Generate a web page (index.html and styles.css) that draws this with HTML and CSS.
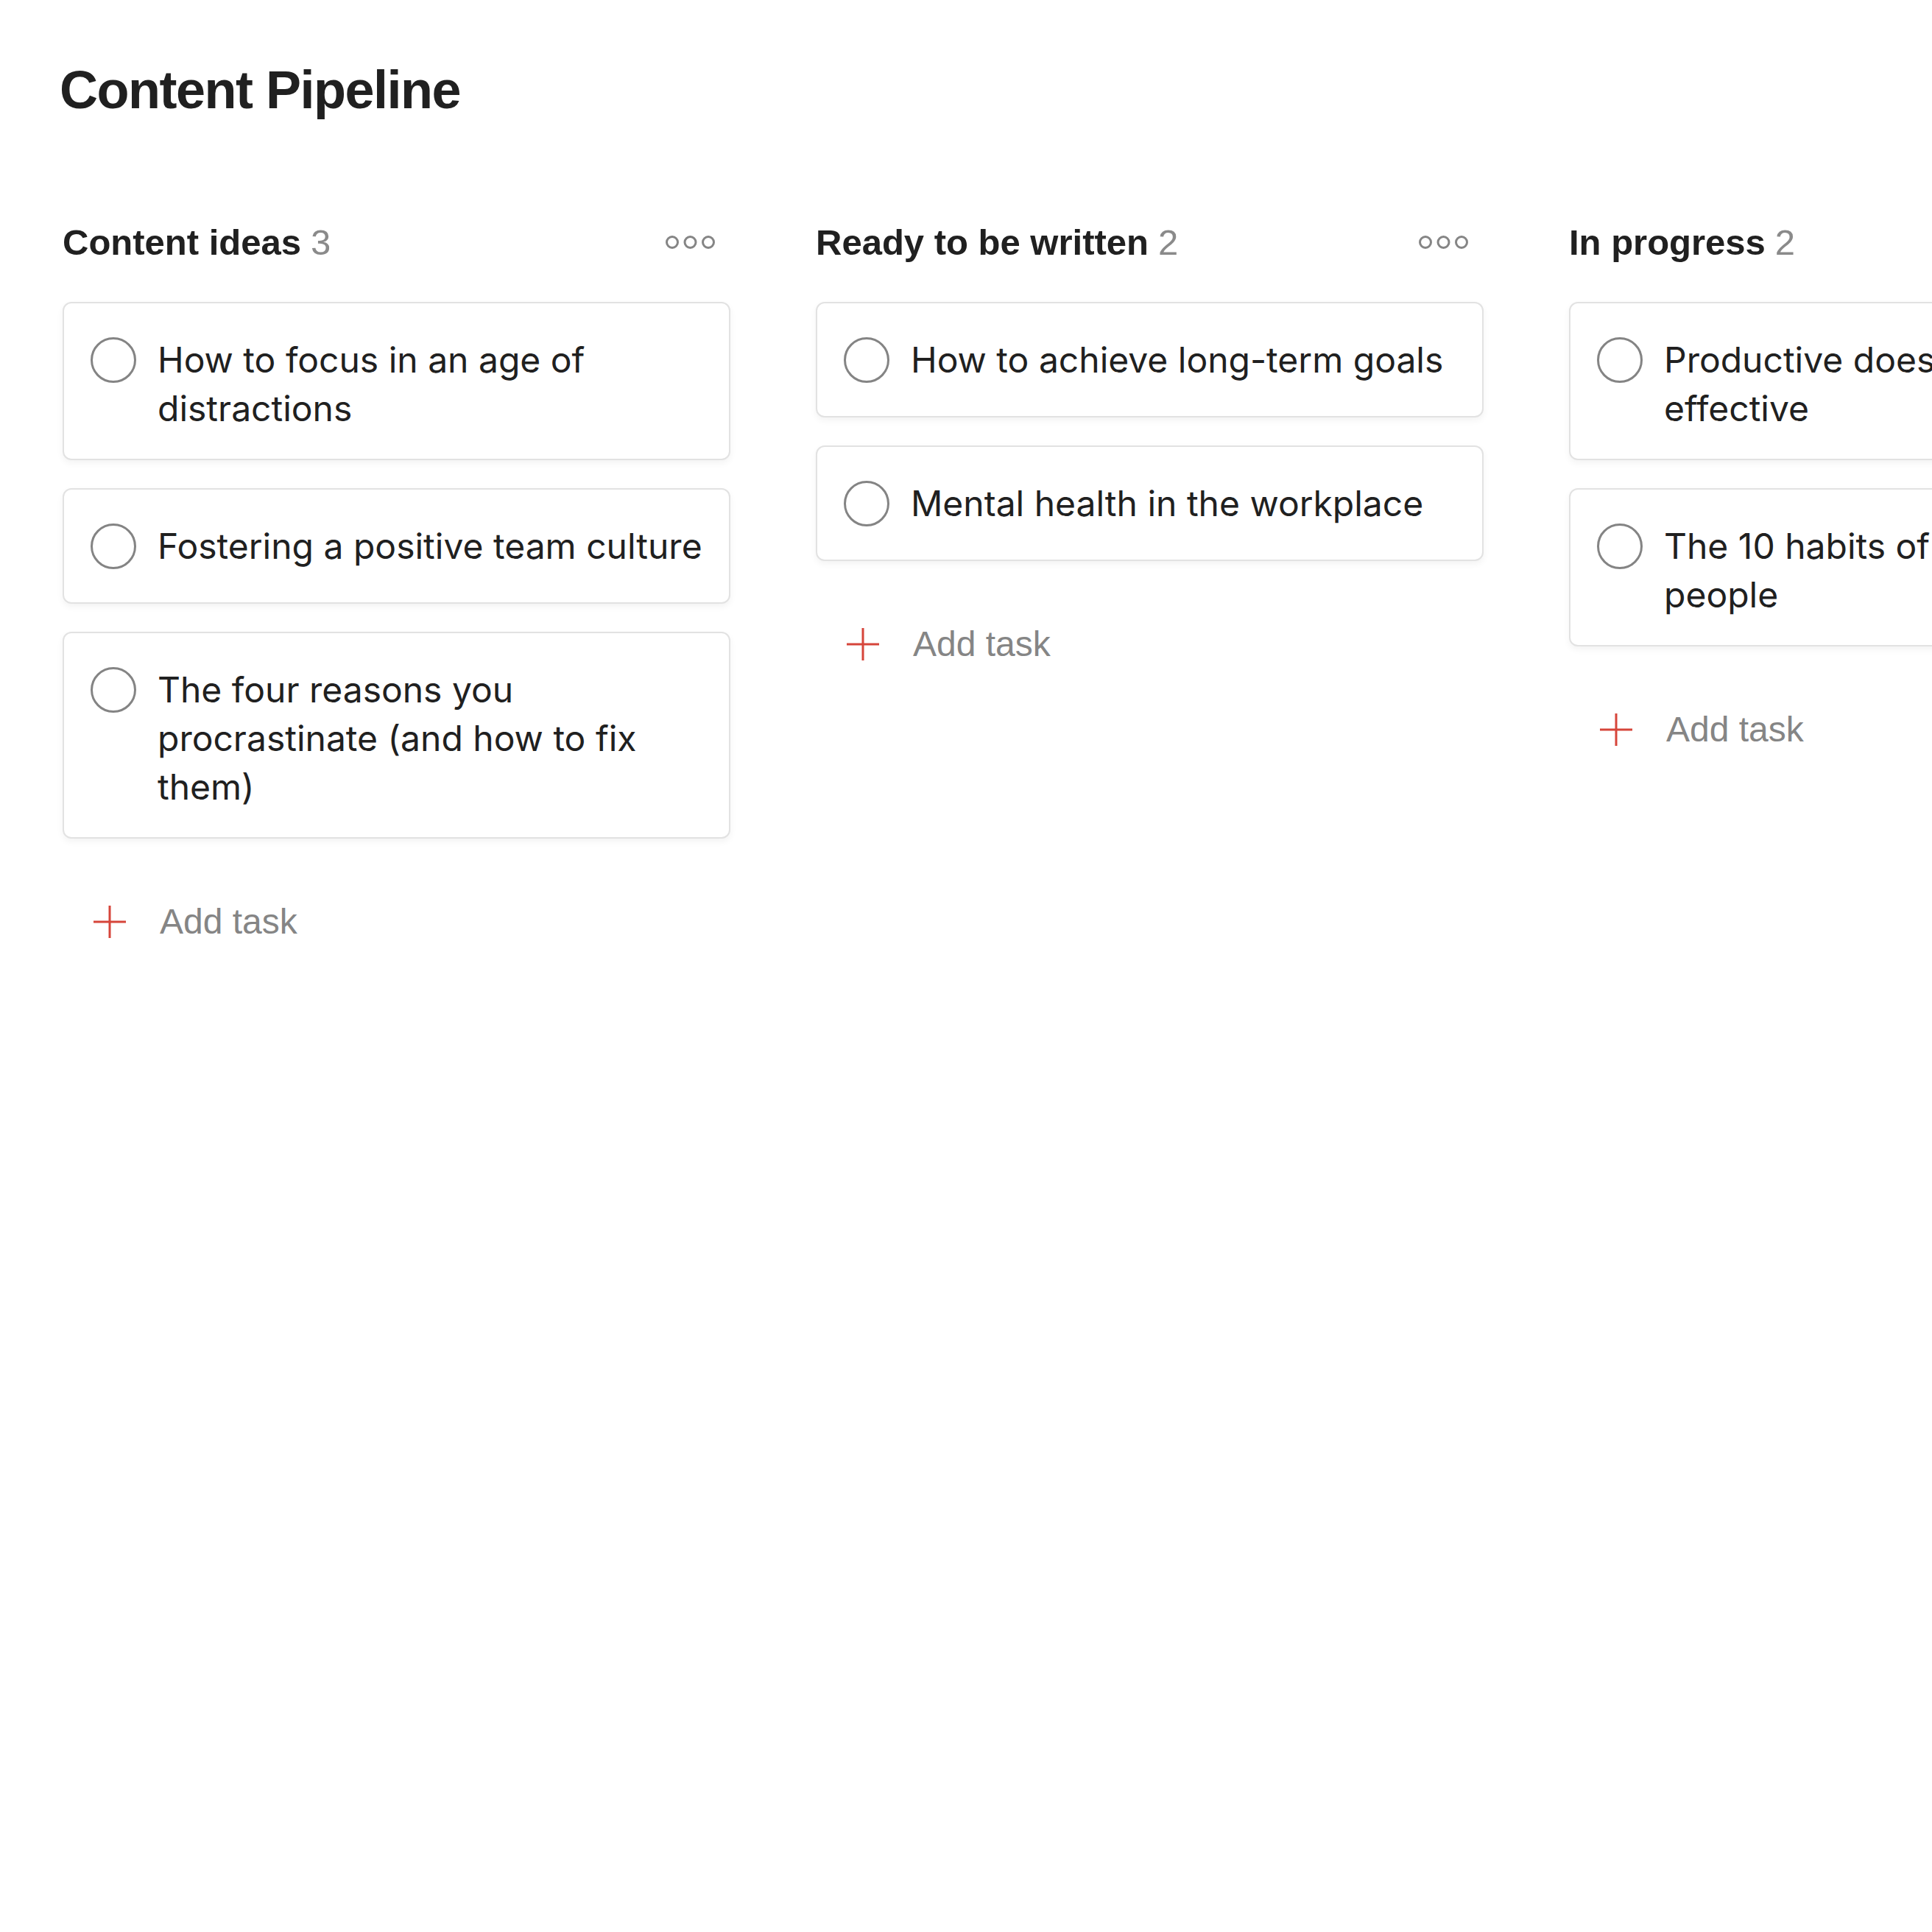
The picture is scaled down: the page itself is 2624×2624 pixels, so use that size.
FILE: index.html
```html
<!DOCTYPE html>
<html lang="en">
<head>
<meta charset="UTF-8">
<title>Content Pipeline</title>
<link rel="stylesheet" href="styles.css">
</head>
<body>
<main class="page">
<h1>Content Pipeline</h1>
<div class="board">

    <section class="column">
        <header class="column-head">
            <h2>Content ideas<span class="count">3</span></h2>
            <button class="more" aria-label="Section options">
                <svg width="68" height="20" viewBox="0 0 68 20"><circle cx="9" cy="10" r="7.5"/><circle cx="33.5" cy="10" r="7.5"/><circle cx="58" cy="10" r="7.5"/></svg>
            </button>
        </header>
        <ul class="tasks">
            <li class="task"><span class="check"></span><span class="task-text">How to focus in an age of distractions</span></li>
            <li class="task"><span class="check"></span><span class="task-text">Fostering a positive team culture</span></li>
            <li class="task"><span class="check"></span><span class="task-text">The four reasons you procrastinate (and how to fix them)</span></li>
        </ul>
        <button class="add-task">
            <svg width="46" height="46" viewBox="0 0 46 46"><path d="M23 1V45M1 23H45"/></svg>
            <span>Add task</span>
        </button>
    </section>

    <section class="column">
        <header class="column-head">
            <h2>Ready to be written<span class="count">2</span></h2>
            <button class="more" aria-label="Section options">
                <svg width="68" height="20" viewBox="0 0 68 20"><circle cx="9" cy="10" r="7.5"/><circle cx="33.5" cy="10" r="7.5"/><circle cx="58" cy="10" r="7.5"/></svg>
            </button>
        </header>
        <ul class="tasks">
            <li class="task"><span class="check"></span><span class="task-text">How to achieve long-term goals</span></li>
            <li class="task"><span class="check"></span><span class="task-text">Mental health in the workplace</span></li>
        </ul>
        <button class="add-task">
            <svg width="46" height="46" viewBox="0 0 46 46"><path d="M23 1V45M1 23H45"/></svg>
            <span>Add task</span>
        </button>
    </section>

    <section class="column">
        <header class="column-head">
            <h2>In progress<span class="count">2</span></h2>
            <button class="more" aria-label="Section options">
                <svg width="68" height="20" viewBox="0 0 68 20"><circle cx="9" cy="10" r="7.5"/><circle cx="33.5" cy="10" r="7.5"/><circle cx="58" cy="10" r="7.5"/></svg>
            </button>
        </header>
        <ul class="tasks">
            <li class="task"><span class="check"></span><span class="task-text">Productive doesn't mean effective</span></li>
            <li class="task"><span class="check"></span><span class="task-text">The 10 habits of highly effective people</span></li>
        </ul>
        <button class="add-task">
            <svg width="46" height="46" viewBox="0 0 46 46"><path d="M23 1V45M1 23H45"/></svg>
            <span>Add task</span>
        </button>
    </section>

</div>
</main>
</body>
</html>
```

FILE: styles.css
```css
body{
    margin:0;
    background:#fff;
    color:#202020;
    font-family:"Liberation Sans",Arial,sans-serif;
    overflow:hidden;
}
.page{
    padding:82px 0 0 85px;
}
h1{
    margin:0 0 0 -4px;
    font-size:72px;
    line-height:80px;
    letter-spacing:-1.5px;
    font-weight:700;
}
.board{
    display:flex;
    gap:116px;
    margin-top:139px;
}
.column{
    flex:0 0 907px;
    display:flex;
    flex-direction:column;
}
.column-head{
    display:flex;
    align-items:center;
    justify-content:space-between;
    height:56px;
    padding-right:20px;
}
h2{
    margin:0;
    font-size:49px;
    line-height:56px;
    font-weight:700;
}
.count{
    margin-left:13px;
    font-weight:400;
    color:#8a8a8a;
}
.more{
    display:flex;
    padding:0;
    border:none;
    background:none;
}
.more circle{
    fill:none;
    stroke:#858585;
    stroke-width:3;
}

/* task cards */
.tasks{
    list-style:none;
    margin:53px 0 0;
    padding:0;
    display:flex;
    flex-direction:column;
    gap:38px;
}
.task{
    box-sizing:border-box;
    min-height:157px;
    display:flex;
    align-items:flex-start;
    gap:29px;
    padding:44px 30px 35px 36px;
    border:2px solid #e2e2e2;
    border-radius:12px;
    background:#fff;
    box-shadow:0 4px 10px rgba(0,0,0,0.05);
}
.check{
    flex:0 0 auto;
    box-sizing:border-box;
    width:62px;
    height:62px;
    margin-top:2px;
    border:3px solid #848484;
    border-radius:50%;
}
.task-text{
    font-family:Inter,"Liberation Sans",sans-serif;
    font-size:48px;
    line-height:66px;
    color:#202020;
}

.add-task{
    display:flex;
    align-items:center;
    gap:45px;
    margin-top:80px;
    padding:0 0 0 41px;
    border:none;
    background:none;
    font-family:"Liberation Sans",Arial,sans-serif;
    font-size:48px;
    line-height:66px;
    color:#858585;
    cursor:pointer;
}
.add-task path{
    stroke:#d6453a;
    stroke-width:3;
    fill:none;
}
```
